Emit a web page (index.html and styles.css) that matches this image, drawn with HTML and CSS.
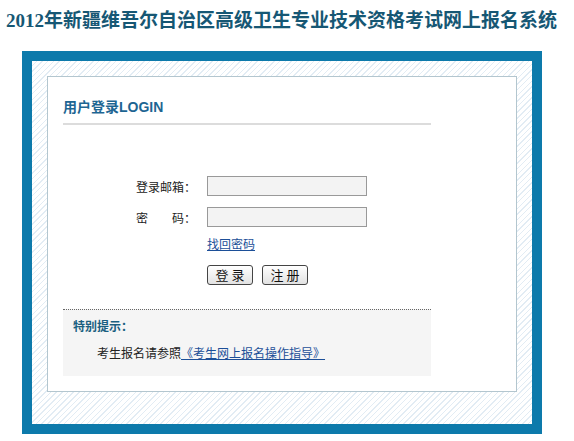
FILE: index.html
```html
<!DOCTYPE html>
<html lang="zh-CN">
<head>
  <meta charset="UTF-8">
  <title>2012年新疆维吾尔自治区高级卫生专业技术资格考试网上报名系统</title>
  <link rel="stylesheet" href="styles.css">
</head>
<body>
  <h1 class="site-title"><span class="year">2012</span>年新疆维吾尔自治区高级卫生专业技术资格考试网上报名系统</h1>

  <div class="frame">
    <div class="panel">
      <h2 class="panel-title">用户登录LOGIN</h2>

      <form class="login-form" autocomplete="off">
        <div class="row">
          <label for="email">登录邮箱：</label>
          <input type="text" id="email">
        </div>
        <div class="row">
          <label for="pwd">密&emsp;&emsp;码：</label>
          <input type="password" id="pwd">
        </div>
        <div class="row-indent">
          <a href="#" class="forgot">找回密码</a>
        </div>
        <div class="row-indent buttons">
          <button type="submit" class="btn">登 录</button>
          <button type="button" class="btn">注 册</button>
        </div>
      </form>

      <div class="notice">
        <h3>特别提示：</h3>
        <p>考生报名请参照<a href="#">《考生网上报名操作指导》</a></p>
      </div>
    </div>
  </div>
</body>
</html>
```

FILE: styles.css
```css
body {
  margin: 0;
  font-family: "Liberation Sans", "Noto Sans CJK SC", sans-serif;
  font-size: 12px;
  color: #222;
  background: #fff;
}
.site-title {
  margin: 0;
  padding: 8px 0 0 6px;
  height: 51px;
  box-sizing: border-box;
  font-family: "Noto Sans CJK SC", sans-serif;
  font-size: 19px;
  line-height: 22px;
  font-weight: bold;
  color: #165774;
  white-space: nowrap;
}
.site-title .year {
  font-family: "Liberation Serif", serif;
}
.frame {
  margin-left: 22px;
  width: 520px;
  height: 383px;
  box-sizing: border-box;
  border: 10px solid #0d7aab;
  padding: 15px 15px 31px;
  background: repeating-linear-gradient(135deg, #fff 0 3px, #e2ecf4 3px 4px);
}
.panel {
  height: 316px;
  box-sizing: border-box;
  border: 1px solid #b3c6cf;
  background: #fff;
  padding: 0 85px 0 15px;
}
.panel-title {
  margin: 0;
  padding-top: 21px;
  height: 48px;
  box-sizing: border-box;
  border-bottom: 2px solid #dcdcdc;
  font-size: 14px;
  line-height: 18px;
  color: #1d6592;
}
.login-form {
  margin: 51px 0 0 73px;
}
.row {
  display: flex;
  align-items: center;
  height: 20px;
  margin-bottom: 11px;
}
.row label {
  width: 60px;
  margin-right: 11px;
  white-space: nowrap;
}
.row input {
  width: 160px;
  height: 20px;
  box-sizing: border-box;
  border: 1px solid #999;
  background: #f3f3f3;
  padding: 0 3px;
  margin: 0;
}
.row-indent {
  margin-left: 71px;
}
.forgot {
  display: inline-block;
  margin-top: -1px;
  line-height: 16px;
  color: #1c4f98;
}
.buttons {
  margin-top: 12px;
  display: flex;
  gap: 9px;
}
.btn {
  width: 46px;
  height: 20px;
  padding: 0;
  border: 1px solid #444;
  border-radius: 3px;
  background: linear-gradient(#fff, #e2e2e2);
  font-family: "Noto Sans CJK SC", sans-serif;
  font-size: 13px;
  line-height: 16px;
  color: #111;
  cursor: pointer;
}
.notice {
  margin-top: 24px;
  height: 67px;
  box-sizing: border-box;
  border-top: 1px dotted #666;
  background: #f5f5f5;
  padding: 9px 0 0 10px;
}
.notice h3 {
  margin: 0;
  font-size: 12px;
  line-height: 16px;
  color: #1a5f80;
}
.notice p {
  margin: 11px 0 0 24px;
  line-height: 16px;
}
.notice a {
  color: #1c4f98;
}
```
